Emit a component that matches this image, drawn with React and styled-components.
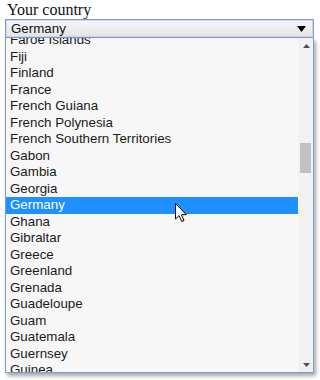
import React from "react";
import styled, { createGlobalStyle } from "styled-components";

const countries = [
  "Faroe Islands",
  "Fiji",
  "Finland",
  "France",
  "French Guiana",
  "French Polynesia",
  "French Southern Territories",
  "Gabon",
  "Gambia",
  "Georgia",
  "Germany",
  "Ghana",
  "Gibraltar",
  "Greece",
  "Greenland",
  "Grenada",
  "Guadeloupe",
  "Guam",
  "Guatemala",
  "Guernsey",
  "Guinea",
  "Guinea-Bissau",
];

const selected = "Germany";

export default function App() {
  return (
    <>
      <GlobalStyle />
      <Page>
        <Label htmlFor="country">Your country</Label>
        <Field>
          <SelectBox id="country">
            <span>{selected}</span>
            <svg width="9" height="6" viewBox="0 0 9 6">
              <path d="M0 0h9L4.5 6z" fill="#000" />
            </svg>
          </SelectBox>
          <Popup>
            <Options>
              <OptionList $offset={6}>
                {countries.map((name) => (
                  <Option key={name} $active={name === selected}>
                    {name}
                  </Option>
                ))}
              </OptionList>
            </Options>
            <ScrollTrack>
              <ArrowButton>
                <svg width="7" height="4" viewBox="0 0 7 4">
                  <path d="M3.5 0L7 4H0z" fill="#505050" />
                </svg>
              </ArrowButton>
              <ThumbArea>
                <Thumb />
              </ThumbArea>
              <ArrowButton>
                <svg width="7" height="4" viewBox="0 0 7 4">
                  <path d="M0 0h7L3.5 4z" fill="#505050" />
                </svg>
              </ArrowButton>
            </ScrollTrack>
          </Popup>
          <Cursor width="12" height="19" viewBox="0 0 12 19">
            <path
              d="M0.5 0.5v15.5l3.6-3.5 2.6 6 2.3-1-2.6-5.8h5z"
              fill="#fff"
              stroke="#000"
              strokeWidth="1"
              strokeLinejoin="round"
            />
          </Cursor>
        </Field>
      </Page>
    </>
  );
}

//! ****************** STYLES ******************//

const GlobalStyle = createGlobalStyle`
  html, body {
    margin: 0;
    background: #fff;
  }
`;

const Page = styled.div`
  display: flex;
  flex-direction: column;
  padding: 0 6px 0 5px;
  height: 380px;
`;

const Label = styled.label`
  font-family: "Liberation Serif", serif;
  font-size: 16px;
  line-height: 19px;
  color: #111;
  padding-left: 2px;
`;

const Field = styled.div`
  position: relative;
  display: flex;
  flex-direction: column;
`;

const SelectBox = styled.div`
  display: flex;
  justify-content: space-between;
  align-items: center;
  height: 19px;
  box-sizing: border-box;
  padding: 0 7px 0 5px;
  border: 1px solid #7d9bd8;
  box-shadow: inset 0 0 0 1px #c9d6ef;
  background: linear-gradient(#f8f8f8, #e3e3e3);
  font-family: "Liberation Sans", Arial, sans-serif;
  font-size: 13.33px;
  color: #111;
`;

const Popup = styled.div`
  height: 335px;
  box-sizing: border-box;
  display: flex;
  border: 1px solid #7d9bd8;
  border-top: none;
  background: #f7f7f7;
  box-shadow: 2px 3px 4px rgba(0, 0, 0, 0.35);
`;

const Options = styled.div`
  flex: 1;
  overflow: hidden;
`;

const OptionList = styled.ul`
  list-style: none;
  margin: ${(p) => -p.$offset}px 0 0;
  padding: 0;
`;

const Option = styled.li`
  height: 16.5px;
  line-height: 16.5px;
  padding-left: 4px;
  font-family: "Liberation Sans", Arial, sans-serif;
  font-size: 13.33px;
  white-space: nowrap;
  color: ${(p) => (p.$active ? "#fff" : "#1a1a1a")};
  background: ${(p) => (p.$active ? "#1e90ff" : "transparent")};
`;

const ScrollTrack = styled.div`
  width: 15px;
  display: flex;
  flex-direction: column;
  background: #f1f1f1;
`;

const ArrowButton = styled.div`
  height: 15px;
  display: flex;
  align-items: center;
  justify-content: center;
  padding-left: 1px;
`;

const ThumbArea = styled.div`
  flex: 1;
  padding: 90px 2px 0;
`;

const Thumb = styled.div`
  height: 30px;
  background: #c1c1c1;
`;

const Cursor = styled.svg`
  position: absolute;
  left: 170px;
  top: 184px;
`;
